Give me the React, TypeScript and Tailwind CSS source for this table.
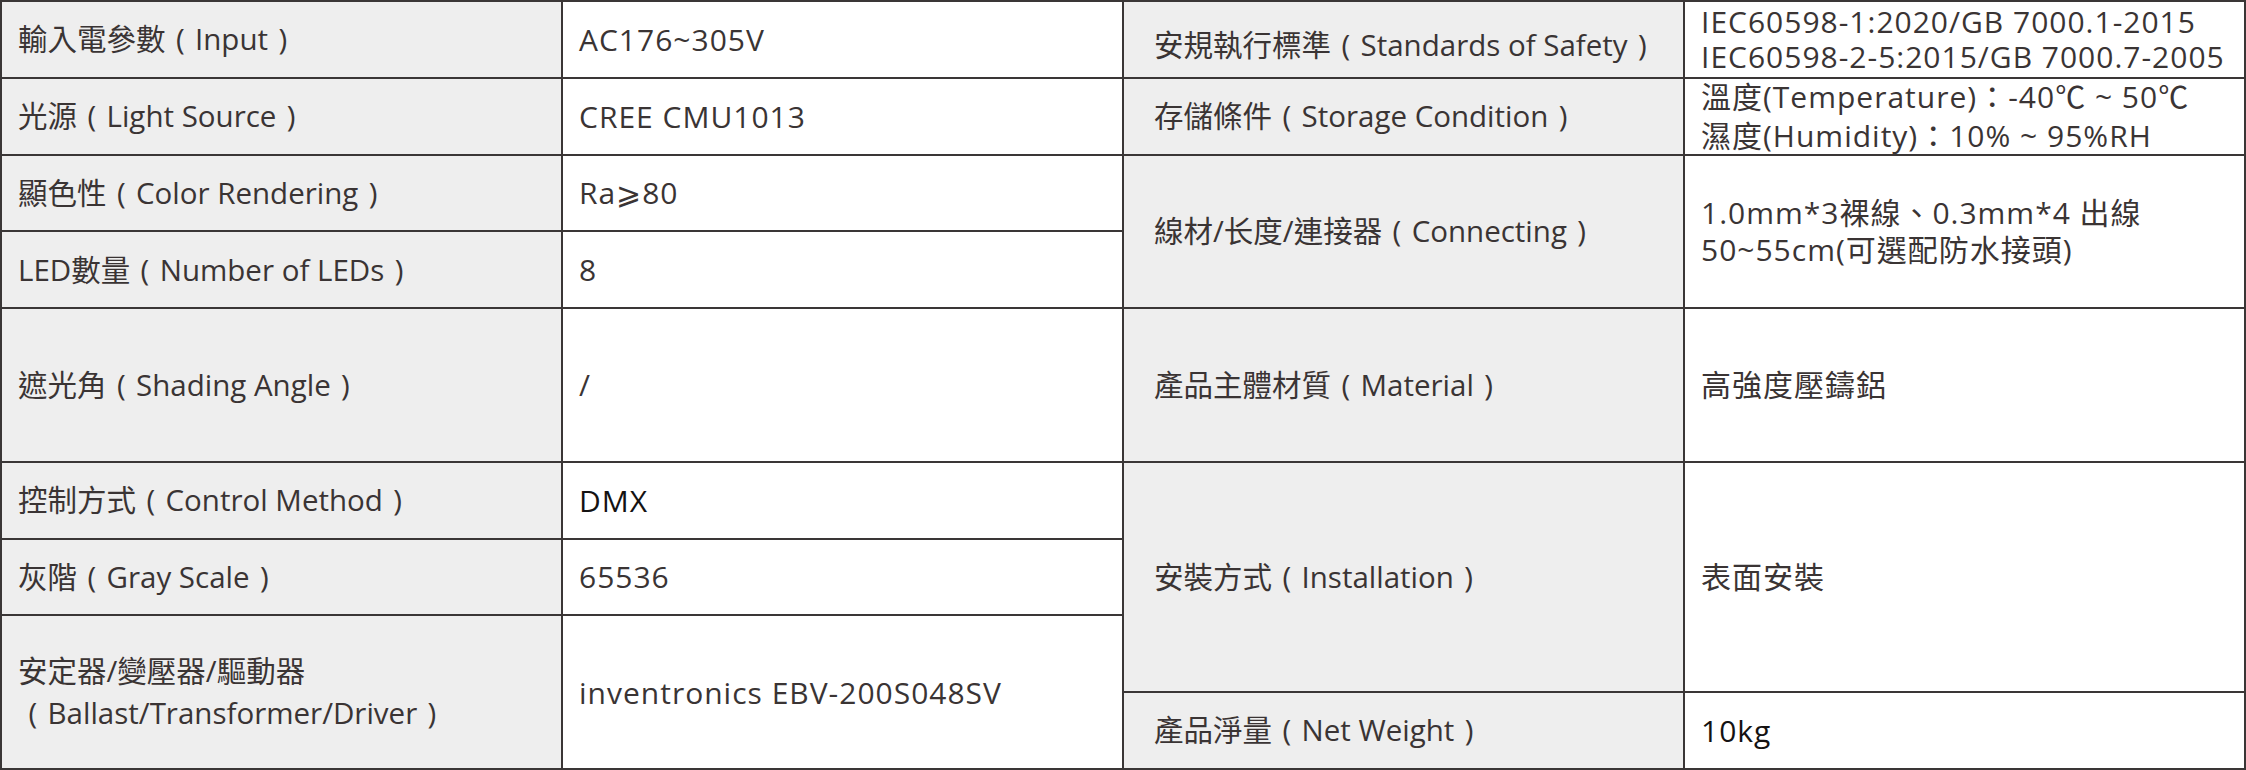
const font = { fontFamily: '"Open Sans", "Noto Sans CJK TC", sans-serif' }

type Cell = {
    zh?: string
    en?: string
    lines?: string[]
    label?: boolean
    span?: string
    extra?: string
}

const cells: Cell[] = [
    { zh: "輸入電參數", en: "Input", label: true },
    { lines: ["AC176~305V"] },
    { zh: "安規執行標準", en: "Standards of Safety", label: true, extra: "pl-[30px] pt-[12px]" },
    { lines: ["IEC60598-1:2020/GB 7000.1-2015", "IEC60598-2-5:2015/GB 7000.7-2005"], extra: "leading-[35px]" },
    { zh: "光源", en: "Light Source", label: true },
    { lines: ["CREE CMU1013"] },
    { zh: "存儲條件", en: "Storage Condition", label: true, extra: "pl-[30px]" },
    { lines: ["溫度(Temperature)：-40℃ ~ 50℃", "濕度(Humidity)：10% ~ 95%RH"], extra: "leading-[39px]" },
    { zh: "顯色性", en: "Color Rendering", label: true },
    { lines: ["Ra⩾80"] },
    { zh: "線材/长度/連接器", en: "Connecting", label: true, span: "row-span-2", extra: "pl-[30px]" },
    { lines: ["1.0mm*3裸線、0.3mm*4 出線", "50~55cm(可選配防水接頭)"], span: "row-span-2", extra: "leading-[37px]" },
    { zh: "LED數量", en: "Number of LEDs", label: true },
    { lines: ["8"] },
    { zh: "遮光角", en: "Shading Angle", label: true, span: "row-span-2" },
    { lines: ["/"], span: "row-span-2" },
    { zh: "產品主體材質", en: "Material", label: true, span: "row-span-2", extra: "pl-[30px]" },
    { lines: ["高強度壓鑄鋁"], span: "row-span-2" },
    { zh: "控制方式", en: "Control Method", label: true },
    { lines: ["DMX"], extra: "text-[#141212]" },
    { zh: "安裝方式", en: "Installation", label: true, span: "row-span-3", extra: "pl-[30px]" },
    { lines: ["表面安裝"], span: "row-span-3" },
    { zh: "灰階", en: "Gray Scale", label: true },
    { lines: ["65536"] },
    { zh: "安定器/變壓器/驅動器", en: "Ballast/Transformer/Driver", label: true, span: "row-span-2", extra: "leading-[42px]" },
    { lines: ["inventronics EBV-200S048SV"], span: "row-span-2" },
    { zh: "產品淨量", en: "Net Weight", label: true, extra: "pl-[30px]" },
    { lines: ["10kg"], extra: "text-[#141212]" },
]

// full-width looking paren, glyph centred in a 1em box
const Paren = ({ children }: { children: string }) => (
    <span className="inline-block w-[1em] text-center">{children}</span>
)

const SpecCell = ({ cell }: { cell: Cell }) => {
    const twoLine = cell.zh === "安定器/變壓器/驅動器"
    return (
        <div
            className={`flex flex-col justify-center border-r-2 border-b-2 border-[#3a3636] pl-4 text-[#3a3434] ${
                cell.label ? "bg-[#eeeeee] text-[29.5px]" : "bg-white text-[30px] tracking-[1px]"
            } ${cell.span ?? ""} ${cell.extra ?? ""}`}
        >
            {cell.label ? (
                twoLine ? (
                    <>
                        <span className="whitespace-nowrap">{cell.zh}</span>
                        <span className="whitespace-nowrap">
                            <Paren>(</Paren>
                            {cell.en}
                            <Paren>)</Paren>
                        </span>
                    </>
                ) : (
                    <span className="whitespace-nowrap">
                        {cell.zh}
                        <Paren>(</Paren>
                        {cell.en}
                        <Paren>)</Paren>
                    </span>
                )
            ) : (
                cell.lines?.map((line) => (
                    <span key={line} className="whitespace-nowrap">
                        {line}
                    </span>
                ))
            )}
        </div>
    )
}

const App = () => {
    return (
        <div style={font} className="w-[2246px] h-[770px] bg-white">
            <div className="grid h-[770px] w-[2246px] grid-cols-4 grid-rows-10 border-t-2 border-l-2 border-[#3a3636]">
                {cells.map((cell, i) => (
                    <SpecCell key={i} cell={cell} />
                ))}
            </div>
        </div>
    )
}

export default App
